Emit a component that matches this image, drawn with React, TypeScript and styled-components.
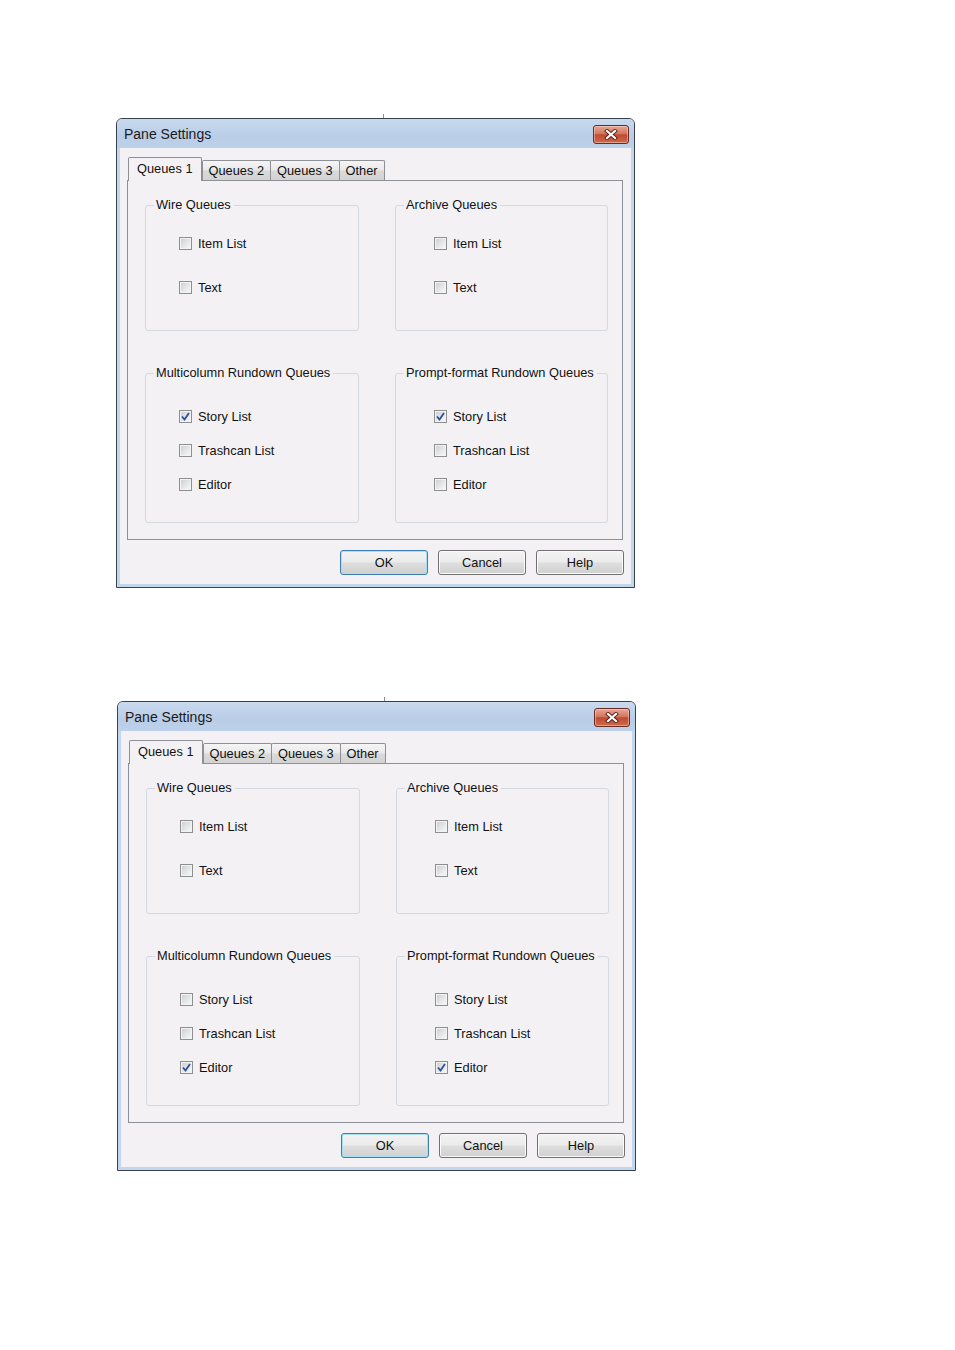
import React from 'react';
import styled, {createGlobalStyle} from 'styled-components';

const GlobalStyle = createGlobalStyle`
    html, body {
        margin: 0;
        padding: 0;
        background: #fff;
    }
    body {
        font-family: "Liberation Sans", Arial, sans-serif;
        color: #111;
    }
`;

const Page = styled.div`
    width: 955px;
    min-height: 1350px;
    padding-top: 114px;
    box-sizing: border-box;
    display: flex;
    flex-direction: column;
    gap: 109px;
`;

const Shot = styled.div<{ $left: number }>`
    margin-left: ${p => p.$left}px;
    display: flex;
    flex-direction: column;
`;

const Tick = styled.div`
    width: 1px;
    height: 4px;
    margin-left: 267px;
    background: #8c8c8c;
`;

const Window = styled.div`
    width: 519px;
    height: 470px;
    box-sizing: border-box;
    border: 1px solid #3a4250;
    border-radius: 6px 6px 0 0;
    background: #c2d6ed;
    padding: 0 3px 3px;
    display: flex;
    flex-direction: column;
    box-shadow: inset 0 1px 0 #e2ecf7;
`;

const TitleBar = styled.div`
    height: 29px;
    flex: none;
    margin: 0 -3px;
    padding: 0 5px 0 7px;
    border-radius: 5px 5px 0 0;
    background: linear-gradient(#c9daef, #b9cde7 60%, #bdd1ea);
    display: flex;
    align-items: center;
    justify-content: space-between;
`;

const Title = styled.span`
    font-size: 14px;
    color: #1b1b1b;
`;

const CloseButton = styled.div`
    width: 36px;
    height: 19px;
    box-sizing: border-box;
    margin-top: 2px;
    border: 1px solid #6b2a22;
    border-radius: 3px;
    background: linear-gradient(#e7a797, #d3765f 45%, #c04a31 52%, #cf6a4b);
    box-shadow: inset 0 0 0 1px rgba(255, 225, 215, 0.45);
    display: flex;
    align-items: center;
    justify-content: center;
`;

const Client = styled.div`
    flex: 1;
    background: #f4f1f5;
    padding: 9px 8px 0 7px;
    display: flex;
    flex-direction: column;
`;

const TabStrip = styled.div`
    height: 24px;
    padding-left: 1px;
    display: flex;
    align-items: flex-start;
    position: relative;
    z-index: 1;
`;

const Tab = styled.div<{ $active?: boolean }>`
    box-sizing: border-box;
    height: ${p => (p.$active ? 24 : 20)}px;
    margin-top: ${p => (p.$active ? 0 : 3)}px;
    margin-left: ${p => (p.$active ? 0 : -1)}px;
    padding: 0 ${p => (p.$active ? 8 : 6)}px;
    border: 1px solid #8d9096;
    border-bottom: none;
    border-radius: 2px 2px 0 0;
    background: ${p => (p.$active ? '#f4f1f5' : 'linear-gradient(#f5f5f5, #e9e9e9 48%, #d9d9d9 52%, #d3d3d3)')};
    font-size: 12.8px;
    line-height: ${p => (p.$active ? 21 : 19)}px;
    white-space: nowrap;
    &:nth-child(2) {
        margin-left: 0;
    }
`;

const Panel = styled.div`
    height: 360px;
    box-sizing: border-box;
    margin-top: -1px;
    border: 1px solid #8d9096;
    padding: 16px 0 0 17px;
    display: grid;
    grid-template-columns: 214px 213px;
    grid-auto-rows: min-content;
    column-gap: 36px;
    row-gap: 34px;
`;

const Group = styled.fieldset<{ $height: number }>`
    margin: 0;
    padding: 0;
    min-width: 0;
    height: ${p => p.$height}px;
    box-sizing: border-box;
    border: 1px solid #d2d9e1;
    border-radius: 3px;
`;

const Legend = styled.legend`
    margin-left: 8px;
    padding: 0 3px 0 2px;
    font-size: 12.8px;
    line-height: 16px;
`;

const GroupBody = styled.div<{ $top: number; $gap: number; $indent: number }>`
    padding: ${p => p.$top}px 0 0 ${p => p.$indent}px;
    display: flex;
    flex-direction: column;
    gap: ${p => p.$gap}px;
`;

const CheckRow = styled.label`
    height: 16px;
    display: flex;
    align-items: center;
    gap: 6px;
    font-size: 12.8px;
`;

const Box = styled.span`
    width: 13px;
    height: 13px;
    box-sizing: border-box;
    flex: none;
    border: 1px solid #8e8f8f;
    background: linear-gradient(135deg, #cbccce, #eceef0 70%, #f7f7f8);
    box-shadow: inset 0 0 0 1px #f3f3f4;
    display: flex;
    align-items: center;
    justify-content: center;
`;

const ButtonRow = styled.div`
    margin-top: 10px;
    margin-right: -1px;
    display: flex;
    justify-content: flex-end;
    gap: 10px;
`;

const Button = styled.div<{ $default?: boolean }>`
    width: 88px;
    height: 25px;
    box-sizing: border-box;
    border: 1px solid ${p => (p.$default ? '#3c7fb1' : '#707070')};
    border-radius: 3px;
    background: linear-gradient(#f3f3f3, #ebebeb 48%, #dedede 52%, #d0d0d0);
    box-shadow: ${p => (p.$default ? 'inset 0 0 0 1px #a6e0f6' : 'inset 0 0 0 1px #fbfbfb')};
    font-size: 12.8px;
    line-height: 23px;
    text-align: center;
`;

type GroupDef = {
    title: string;
    items: string[];
};

const topGroups: GroupDef[] = [
    {title: 'Wire Queues', items: ['Item List', 'Text']},
    {title: 'Archive Queues', items: ['Item List', 'Text']},
];

const bottomGroups: GroupDef[] = [
    {title: 'Multicolumn Rundown Queues', items: ['Story List', 'Trashcan List', 'Editor']},
    {title: 'Prompt-format Rundown Queues', items: ['Story List', 'Trashcan List', 'Editor']},
];

function CheckMark() {
    return (
        <svg width="9" height="9" viewBox="0 0 9 9">
            <polyline points="1,4.5 3.5,7.5 8,1" fill="none" stroke="#2c4f9e" strokeWidth="1.8" />
        </svg>
    );
}

function CloseGlyph() {
    return (
        <svg width="14" height="11" viewBox="0 0 14 11">
            <g strokeLinecap="square">
                <path d="M3 2 L11 9 M11 2 L3 9" stroke="#5a2018" strokeWidth="4" />
                <path d="M3 2 L11 9 M11 2 L3 9" stroke="#ffffff" strokeWidth="2.2" />
            </g>
        </svg>
    );
}

function CheckItem({label, checked}: { label: string; checked: boolean }) {
    return (
        <CheckRow>
            <Box>{checked && <CheckMark />}</Box>
            {label}
        </CheckRow>
    );
}

function Dialog({checked}: { checked: string }) {
    const renderGroup = (g: GroupDef, col: number, top: boolean) => (
        <Group key={g.title} $height={top ? 134 : 158}>
            <Legend>{g.title}</Legend>
            <GroupBody $top={top ? 22 : 27} $gap={top ? 28 : 18} $indent={col === 0 ? 33 : 38}>
                {g.items.map(item => (
                    <CheckItem key={item} label={item} checked={!top && item === checked} />
                ))}
            </GroupBody>
        </Group>
    );

    return (
        <Window>
            <TitleBar>
                <Title>Pane Settings</Title>
                <CloseButton>
                    <CloseGlyph />
                </CloseButton>
            </TitleBar>
            <Client>
                <TabStrip>
                    <Tab $active>Queues 1</Tab>
                    <Tab>Queues 2</Tab>
                    <Tab>Queues 3</Tab>
                    <Tab>Other</Tab>
                </TabStrip>
                <Panel>
                    {topGroups.map((g, i) => renderGroup(g, i, true))}
                    {bottomGroups.map((g, i) => renderGroup(g, i, false))}
                </Panel>
                <ButtonRow>
                    <Button $default>OK</Button>
                    <Button>Cancel</Button>
                    <Button>Help</Button>
                </ButtonRow>
            </Client>
        </Window>
    );
}

export default function App() {
    return (
        <>
            <GlobalStyle />
            <Page>
                <Shot $left={116}>
                    <Tick />
                    <Dialog checked="Story List" />
                </Shot>
                <Shot $left={117}>
                    <Tick />
                    <Dialog checked="Editor" />
                </Shot>
            </Page>
        </>
    );
}
